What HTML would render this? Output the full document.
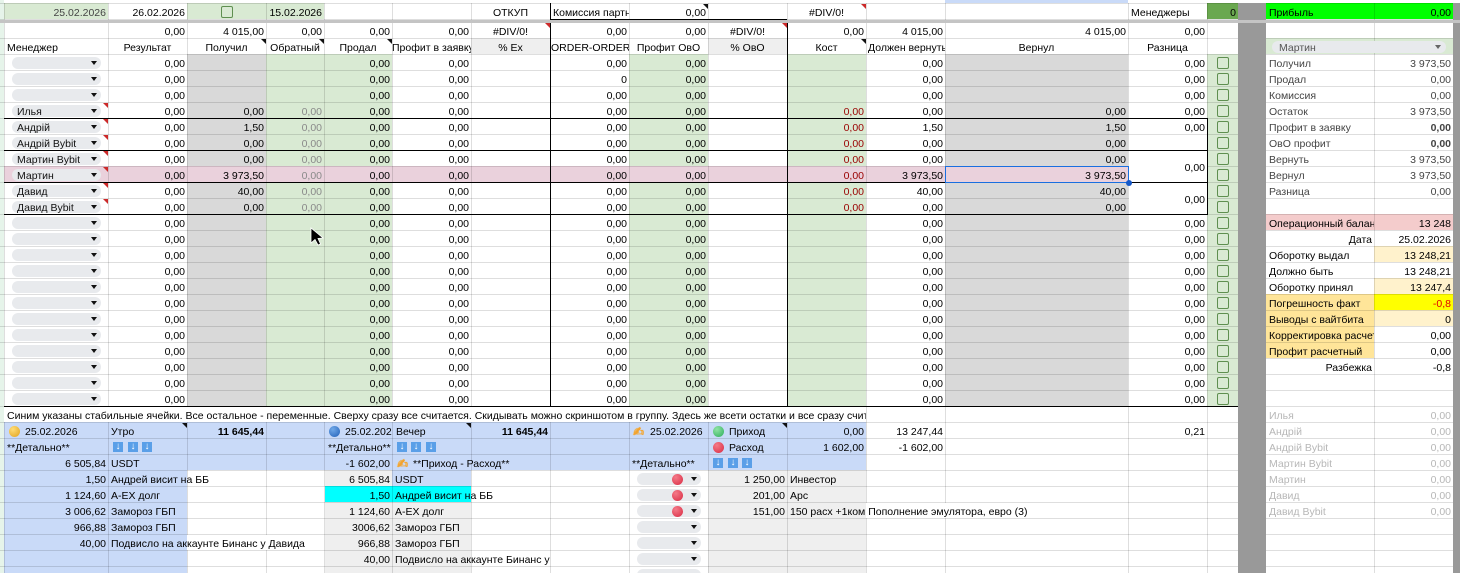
<!DOCTYPE html>
<html lang="ru"><head><meta charset="utf-8"><title>Таблица</title>
<style>
html,body{margin:0;padding:0;background:#fff}
#p{position:relative;width:1460px;height:573px;overflow:hidden;background:#fff;font:10.5px/16px "Liberation Sans","Noto Sans CJK SC",sans-serif;color:#000}
#p div{position:absolute}
.f{position:absolute}
.c{box-sizing:border-box;text-align:right;padding-right:2px;overflow:hidden;white-space:nowrap;margin-top:1px}
.l{text-align:left;padding:0 0 0 3px}
.m{text-align:center;padding:0}
.d{top:55px;height:352px}
.v{width:1px;top:3px;height:570px;background:rgba(0,0,0,.13)}
.h{left:0;width:1460px;height:1px;background:rgba(0,0,0,.13)}
.k{background:#000}
.ch i{display:block;position:relative;height:12px;margin:0 0 4px;background:#e8eaed;border-radius:6px;font-style:normal;line-height:14px;padding-left:5px;box-sizing:border-box;color:#111;white-space:nowrap}
.ch i:after{content:"";position:absolute;right:4px;top:4px;border:3.5px solid transparent;border-top:4px solid #111;border-bottom:0}
.cb b{display:block;box-sizing:border-box;width:12px;height:12px;margin:0 0 4px;border:1.5px solid #5f8f50;border-radius:2px}
.t{width:0;height:0;border-top:5px solid #cc2a2a;border-left:5px solid transparent}
.tk{border-top-color:#111}
.o{border-radius:50%;width:11px;height:11px}
.g{background:radial-gradient(circle at 35% 30%,#ffdd77,#e2a11a)}
.bl{background:radial-gradient(circle at 35% 30%,#6fa8e8,#2361b8)}
.gr{background:radial-gradient(circle at 35% 30%,#8fe3a5,#2fae5c)}
.re{background:radial-gradient(circle at 35% 30%,#f47a88,#d92b43)}
.ar{width:10px;height:10px;background:#5a9fe8;color:#fff;font:bold 10px/10px "Liberation Sans",sans-serif;text-align:center}
.hd{color:#f2a32e;font:13px/14px "DejaVu Sans",sans-serif;text-shadow:.5px .5px 0 #f2a32e,-.5px 0 0 #f7b84a,0 0 1px #f2a32e}
</style></head><body><div id="p">

<!-- fills -->
<div class="f" style="left:0;top:0;width:4px;height:573px;background:#e6f4ea"></div>
<div class="f" style="left:945px;top:0;width:183px;height:3px;background:#c9daf8"></div>
<div class="f" style="left:4px;top:3px;width:104px;height:16px;background:#d9ead3"></div>
<div class="f" style="left:187px;top:3px;width:79px;height:16px;background:#d9ead3"></div>
<div class="f" style="left:266px;top:3px;width:58px;height:16px;background:#d9ead3"></div>
<div class="f" style="left:1207px;top:3px;width:31px;height:16px;background:#6aa84f"></div>
<div class="f" style="left:1266px;top:3px;width:187px;height:16px;background:#00ff00"></div>
<div class="f" style="left:471px;top:38px;width:79px;height:16px;background:#efefef"></div>
<div class="f" style="left:708px;top:38px;width:79px;height:16px;background:#efefef"></div>
<div class="f" style="left:1266px;top:38px;width:187px;height:16px;background:#d9ead3"></div>
<div class="f" style="left:187px;top:54px;width:79px;height:352px;background:#d9d9d9"></div>
<div class="f" style="left:266px;top:54px;width:126px;height:352px;background:#d9ead3"></div>
<div class="f" style="left:629px;top:54px;width:79px;height:352px;background:#d9ead3"></div>
<div class="f" style="left:787px;top:54px;width:79px;height:352px;background:#d9ead3"></div>
<div class="f" style="left:945px;top:54px;width:183px;height:352px;background:#d9d9d9"></div>
<div class="f" style="left:1207px;top:54px;width:31px;height:352px;background:#d9ead3"></div>
<div class="f" style="left:4px;top:166px;width:1124px;height:16px;background:#ead1dc"></div>
<div class="f" style="left:4px;top:422px;width:862px;height:48px;background:#c9daf8"></div>
<div class="f" style="left:4px;top:470px;width:183px;height:103px;background:#c9daf8"></div>
<div class="f" style="left:325px;top:470px;width:146px;height:103px;background:#efefef"></div>
<div class="f" style="left:392px;top:470px;width:79px;height:16px;background:#c9daf8"></div>
<div class="f" style="left:325px;top:486px;width:146px;height:16px;background:#00ffff"></div>
<div class="f" style="left:708px;top:470px;width:158px;height:103px;background:#efefef"></div>
<div class="f" style="left:1266px;top:214px;width:187px;height:16px;background:#f4cccc"></div>
<div class="f" style="left:1374px;top:246px;width:79px;height:16px;background:#fff2cc"></div>
<div class="f" style="left:1374px;top:278px;width:79px;height:16px;background:#fff2cc"></div>
<div class="f" style="left:1266px;top:294px;width:108px;height:16px;background:#ffe599"></div>
<div class="f" style="left:1374px;top:294px;width:79px;height:16px;background:#ffff00"></div>
<div class="f" style="left:1266px;top:310px;width:108px;height:16px;background:#ffe599"></div>
<div class="f" style="left:1374px;top:310px;width:79px;height:16px;background:#fff2cc"></div>
<div class="f" style="left:1266px;top:326px;width:108px;height:32px;background:#ffe599"></div>

<!-- grid -->
<div class="f" style="left:0;top:38px;width:1460px;height:535px;background:repeating-linear-gradient(to bottom,rgba(0,0,0,.13) 0,rgba(0,0,0,.13) 1px,transparent 1px,transparent 16px)"></div>
<div class="h" style="top:3px"></div>
<div class="h" style="top:19px"></div>
<div class="v" style="left:4px"></div><div class="v" style="left:108px"></div><div class="v" style="left:187px"></div><div class="v" style="left:266px"></div><div class="v" style="left:324px"></div><div class="v" style="left:392px"></div><div class="v" style="left:471px"></div><div class="v" style="left:550px"></div><div class="v" style="left:629px"></div><div class="v" style="left:708px"></div><div class="v" style="left:787px"></div><div class="v" style="left:866px"></div><div class="v" style="left:945px"></div><div class="v" style="left:1128px"></div><div class="v" style="left:1207px"></div><div class="v" style="left:1265px"></div><div class="v" style="left:1374px"></div>

<!-- overflow patches -->
<div class="f" style="left:4px;top:407px;width:862px;height:15px;background:#fff"></div>
<div class="f" style="left:188px;top:471px;width:78px;height:15px;background:#fff"></div>
<div class="f" style="left:187px;top:535px;width:121px;height:15px;background:#fff"></div>
<div class="f" style="left:866px;top:503px;width:168px;height:15px;background:#fff"></div>
<div class="f" style="left:1129px;top:151px;width:78px;height:31px;background:#fff"></div>
<div class="f" style="left:1129px;top:183px;width:78px;height:31px;background:#fff"></div>

<!-- gray separators -->
<div class="f" style="left:1238px;top:3px;width:28px;height:570px;background:#999"></div>
<div class="f" style="left:1453px;top:3px;width:7px;height:570px;background:#999"></div>
<div class="f" style="left:0;top:20px;width:1460px;height:3px;background:#c4c4c4"></div>

<!-- black rules -->
<div class="f k" style="left:550px;top:3px;width:1px;height:17px"></div>
<div class="f k" style="left:550px;top:19px;width:237px;height:1px"></div>
<div class="f k" style="left:550px;top:23px;width:1px;height:383px"></div>
<div class="f k" style="left:787px;top:23px;width:1px;height:383px"></div>
<div class="f k" style="left:4px;top:118px;width:1203px;height:1px"></div>
<div class="f k" style="left:4px;top:150px;width:1203px;height:1px"></div>
<div class="f k" style="left:4px;top:182px;width:1203px;height:1px"></div>
<div class="f k" style="left:4px;top:214px;width:1203px;height:1px"></div>
<div class="f k" style="left:4px;top:406px;width:1234px;height:1px"></div>
<div class="f k" style="left:1207px;top:118px;width:1px;height:97px"></div>

<!-- selection -->
<div class="f" style="left:945px;top:166px;width:184px;height:17px;box-sizing:border-box;border:1px solid #1a6fe0"></div>
<div class="f" style="left:1126px;top:180px;width:6px;height:6px;border-radius:50%;background:#1558c8"></div>

<!-- top row -->
<div class="c" style="left:4px;top:4px;width:104px;color:#444">25.02.2026</div>
<div class="c" style="left:108px;top:4px;width:79px">26.02.2026</div>
<div class="cb" style="left:221px;top:6px"><b></b></div>
<div class="c" style="left:266px;top:4px;width:58px">15.02.2026</div>
<div class="c m" style="left:471px;top:4px;width:79px">ОТКУП</div>
<div class="c l" style="left:550px;top:4px;width:79px">Комиссия партн</div>
<div class="c" style="left:629px;top:4px;width:79px">0,00</div>
<div class="c m" style="left:787px;top:4px;width:79px">#DIV/0!</div>
<div class="c l" style="left:1128px;top:4px;width:79px">Менеджеры</div>
<div class="c" style="left:1207px;top:4px;width:31px">0</div>
<div class="c l" style="left:1266px;top:4px;width:108px">Прибыль</div>
<div class="c" style="left:1374px;top:4px;width:79px">0,00</div>

<!-- totals -->
<div class="c" style="left:108px;top:23px;width:79px">0,00</div>
<div class="c" style="left:187px;top:23px;width:79px">4 015,00</div>
<div class="c" style="left:266px;top:23px;width:58px">0,00</div>
<div class="c" style="left:324px;top:23px;width:68px">0,00</div>
<div class="c" style="left:392px;top:23px;width:79px">0,00</div>
<div class="c m" style="left:471px;top:23px;width:79px">#DIV/0!</div>
<div class="c" style="left:550px;top:23px;width:79px">0,00</div>
<div class="c" style="left:629px;top:23px;width:79px">0,00</div>
<div class="c m" style="left:708px;top:23px;width:79px">#DIV/0!</div>
<div class="c" style="left:787px;top:23px;width:79px">0,00</div>
<div class="c" style="left:866px;top:23px;width:79px">4 015,00</div>
<div class="c" style="left:945px;top:23px;width:183px">4 015,00</div>
<div class="c" style="left:1128px;top:23px;width:79px">0,00</div>

<!-- headers -->
<div class="c l" style="left:4px;top:39px;width:104px">Менеджер</div>
<div class="c m" style="left:108px;top:39px;width:79px">Результат</div>
<div class="c m" style="left:187px;top:39px;width:79px">Получил</div>
<div class="c m" style="left:266px;top:39px;width:58px">Обратный</div>
<div class="c m" style="left:324px;top:39px;width:68px">Продал</div>
<div class="c l" style="left:392px;top:39px;width:79px;padding-left:0">Профит в заявку</div>
<div class="c m" style="left:471px;top:39px;width:79px">% Ex</div>
<div class="c m" style="left:551px;top:39px;width:78px">ORDER-ORDER</div>
<div class="c m" style="left:629px;top:39px;width:79px">Профит ОвО</div>
<div class="c m" style="left:708px;top:39px;width:79px">% ОвО</div>
<div class="c m" style="left:787px;top:39px;width:79px">Кост</div>
<div class="c l" style="left:866px;top:39px;width:79px;padding-left:2px">Должен вернуть</div>
<div class="c m" style="left:945px;top:39px;width:183px">Вернул</div>
<div class="c m" style="left:1128px;top:39px;width:79px">Разница</div>

<!-- manager chips -->
<div class="ch" style="left:12px;top:57px;width:89px">
<i></i><i></i><i></i><i>Илья</i><i>Андрій</i><i>Андрій Bybit</i><i>Мартин Bybit</i><i>Мартин</i><i>Давид</i><i>Давид Bybit</i><i></i><i></i><i></i><i></i><i></i><i></i><i></i><i></i><i></i><i></i><i></i><i></i>
</div>

<!-- data columns -->
<div class="c d" style="left:108px;width:79px">0,00<br>0,00<br>0,00<br>0,00<br>0,00<br>0,00<br>0,00<br>0,00<br>0,00<br>0,00<br>0,00<br>0,00<br>0,00<br>0,00<br>0,00<br>0,00<br>0,00<br>0,00<br>0,00<br>0,00<br>0,00<br>0,00</div>
<div class="c d" style="left:187px;width:79px"><br><br><br>0,00<br>1,50<br>0,00<br>0,00<br>3 973,50<br>40,00<br>0,00</div>
<div class="c d" style="left:266px;width:58px;color:#8a8a8a"><br><br><br>0,00<br>0,00<br>0,00<br>0,00<br>0,00<br>0,00<br>0,00</div>
<div class="c d" style="left:324px;width:68px">0,00<br>0,00<br>0,00<br>0,00<br>0,00<br>0,00<br>0,00<br>0,00<br>0,00<br>0,00<br>0,00<br>0,00<br>0,00<br>0,00<br>0,00<br>0,00<br>0,00<br>0,00<br>0,00<br>0,00<br>0,00<br>0,00</div>
<div class="c d" style="left:392px;width:79px">0,00<br>0,00<br>0,00<br>0,00<br>0,00<br>0,00<br>0,00<br>0,00<br>0,00<br>0,00<br>0,00<br>0,00<br>0,00<br>0,00<br>0,00<br>0,00<br>0,00<br>0,00<br>0,00<br>0,00<br>0,00<br>0,00</div>
<div class="c d" style="left:550px;width:79px">0,00<br>0<br>0,00<br>0,00<br>0,00<br>0,00<br>0,00<br>0,00<br>0,00<br>0,00<br>0,00<br>0,00<br>0,00<br>0,00<br>0,00<br>0,00<br>0,00<br>0,00<br>0,00<br>0,00<br>0,00<br>0,00</div>
<div class="c d" style="left:629px;width:79px">0,00<br>0,00<br>0,00<br>0,00<br>0,00<br>0,00<br>0,00<br>0,00<br>0,00<br>0,00<br>0,00<br>0,00<br>0,00<br>0,00<br>0,00<br>0,00<br>0,00<br>0,00<br>0,00<br>0,00<br>0,00<br>0,00</div>
<div class="c d" style="left:787px;width:79px;color:#990000"><br><br><br>0,00<br>0,00<br>0,00<br>0,00<br>0,00<br>0,00<br>0,00</div>
<div class="c d" style="left:866px;width:79px">0,00<br>0,00<br>0,00<br>0,00<br>1,50<br>0,00<br>0,00<br>3 973,50<br>40,00<br>0,00<br>0,00<br>0,00<br>0,00<br>0,00<br>0,00<br>0,00<br>0,00<br>0,00<br>0,00<br>0,00<br>0,00<br>0,00</div>
<div class="c d" style="left:945px;width:183px"><br><br><br>0,00<br>1,50<br>0,00<br>0,00<br>3 973,50<br>40,00<br>0,00</div>
<div class="c d" style="left:1128px;width:79px">0,00<br>0,00<br>0,00<br>0,00<br>0,00</div>
<div class="c" style="left:1128px;top:159px;width:79px">0,00</div>
<div class="c" style="left:1128px;top:191px;width:79px">0,00</div>
<div class="c" style="left:1128px;top:215px;width:79px">0,00<br>0,00<br>0,00<br>0,00<br>0,00<br>0,00<br>0,00<br>0,00<br>0,00<br>0,00<br>0,00<br>0,00</div>

<!-- checkboxes -->
<div class="cb" style="left:1217px;top:57px">
<b></b><b></b><b></b><b></b><b></b><b></b><b></b><b></b><b></b><b></b><b></b><b></b><b></b><b></b><b></b><b></b><b></b><b></b><b></b><b></b><b></b><b></b>
</div>

<!-- corner triangles -->
<div class="t" style="left:103px;top:103px"></div><div class="t" style="left:103px;top:119px"></div><div class="t" style="left:103px;top:135px"></div><div class="t" style="left:103px;top:151px"></div><div class="t" style="left:103px;top:167px"></div><div class="t" style="left:103px;top:183px"></div><div class="t" style="left:103px;top:199px"></div>
<div class="t tk" style="left:261px;top:39px"></div><div class="t tk" style="left:319px;top:39px"></div><div class="t tk" style="left:387px;top:39px"></div>
<div class="t tk" style="left:703px;top:4px"></div><div class="t" style="left:861px;top:4px"></div>
<div class="t" style="left:545px;top:23px"></div><div class="t" style="left:782px;top:23px"></div><div class="t tk" style="left:861px;top:39px"></div>
<div class="t tk" style="left:182px;top:423px"></div><div class="t tk" style="left:466px;top:423px"></div><div class="t tk" style="left:782px;top:423px"></div>

<!-- right panel -->
<div class="f" style="left:1272px;top:41px;width:174px;height:12px;background:#e8eaed;border-radius:6px;line-height:14px;color:#555;padding-left:7px;box-sizing:border-box">Мартин</div>
<div class="f" style="left:1435px;top:45px;width:0;height:0;border:3.5px solid transparent;border-top:4px solid #666;border-bottom:0"></div>
<div class="c l" style="left:1266px;top:55px;width:108px;color:#444">Получил<br>Продал<br>Комиссия<br>Остаток<br>Профит в заявку<br>ОвО профит<br>Вернуть<br>Вернул<br>Разница</div>
<div class="c" style="left:1374px;top:55px;width:79px;color:#444">3 973,50<br>0,00<br>0,00<br>3 973,50<br><b>0,00</b><br><b>0,00</b><br>3 973,50<br>3 973,50<br>0,00</div>
<div class="c l" style="left:1266px;top:215px;width:108px">Операционный балан</div>
<div class="c" style="left:1266px;top:231px;width:108px">Дата</div>
<div class="c l" style="left:1266px;top:247px;width:108px">Оборотку выдал<br>Должно быть<br>Оборотку принял<br>Погрешность факт<br>Выводы с вайтбита<br>Корректировка расчет<br>Профит расчетный</div>
<div class="c" style="left:1266px;top:359px;width:108px">Разбежка</div>
<div class="c" style="left:1374px;top:215px;width:79px">13 248<br>25.02.2026<br>13 248,21<br>13 248,21<br>13 247,4<br><span style="color:#e00000">-0,8</span><br>0<br>0,00<br>0,00<br>-0,8</div>
<div class="c l" style="left:1266px;top:407px;width:108px;color:#b7b7b7">Илья<br>Андрій<br>Андрій Bybit<br>Мартин Bybit<br>Мартин<br>Давид<br>Давид Bybit</div>
<div class="c" style="left:1374px;top:407px;width:79px;color:#b7b7b7">0,00<br>0,00<br>0,00<br>0,00<br>0,00<br>0,00<br>0,00</div>

<!-- note -->
<div class="c l" style="left:4px;top:407px;width:862px">Синим указаны стабильные ячейки. Все остальное - переменные. Сверху сразу все считается. Скидывать можно скриншотом в группу. Здесь же всети остатки и все сразу счит</div>

<!-- bottom header -->
<div class="o g" style="left:9px;top:426px"></div>
<div class="c l" style="left:22px;top:423px;width:86px">25.02.2026</div>
<div class="c l" style="left:108px;top:423px;width:79px">Утро</div>
<div class="c" style="left:187px;top:423px;width:79px"><b>11 645,44</b></div>
<div class="o bl" style="left:329px;top:426px"></div>
<div class="c l" style="left:342px;top:423px;width:50px">25.02.2026</div>
<div class="c l" style="left:393px;top:423px;width:78px">Вечер</div>
<div class="c" style="left:471px;top:423px;width:79px"><b>11 645,44</b></div>
<div class="hd" style="left:633px;top:426px">✍</div>
<div class="c l" style="left:647px;top:423px;width:61px">25.02.2026</div>
<div class="o gr" style="left:713px;top:426px"></div>
<div class="c l" style="left:726px;top:423px;width:61px">Приход</div>
<div class="c" style="left:787px;top:423px;width:79px">0,00</div>
<div class="c" style="left:866px;top:423px;width:79px">13 247,44</div>
<div class="c" style="left:1128px;top:423px;width:79px">0,21</div>

<div class="c l" style="left:4px;top:439px;width:104px">**Детально**</div>
<div class="ar" style="left:113px;top:442px">↓</div><div class="ar" style="left:128px;top:442px">↓</div><div class="ar" style="left:142px;top:442px">↓</div>
<div class="c l" style="left:325px;top:439px;width:67px">**Детально**</div>
<div class="ar" style="left:397px;top:442px">↓</div><div class="ar" style="left:411px;top:442px">↓</div><div class="ar" style="left:426px;top:442px">↓</div>
<div class="o re" style="left:713px;top:442px"></div>
<div class="c l" style="left:726px;top:439px;width:61px">Расход</div>
<div class="c" style="left:787px;top:439px;width:79px">1 602,00</div>
<div class="c" style="left:866px;top:439px;width:79px">-1 602,00</div>

<div class="c" style="left:4px;top:455px;width:104px">6 505,84</div>
<div class="c l" style="left:108px;top:455px;width:79px">USDT</div>
<div class="c" style="left:324px;top:455px;width:68px">-1 602,00</div>
<div class="hd" style="left:397px;top:458px">✍</div>
<div class="c l" style="left:410px;top:455px;width:140px">**Приход - Расход**</div>
<div class="c l" style="left:629px;top:455px;width:79px">**Детально**</div>
<div class="ar" style="left:713px;top:458px">↓</div><div class="ar" style="left:728px;top:458px">↓</div><div class="ar" style="left:742px;top:458px">↓</div>

<!-- bottom data -->
<div class="c" style="left:4px;top:471px;width:104px">1,50<br>1 124,60<br>3 006,62<br>966,88<br>40,00</div>
<div class="c l" style="left:108px;top:471px;width:210px">Андрей висит на ББ<br>А-ЕХ долг<br>Замороз ГБП<br>Замороз ГБП<br>Подвисло на аккаунте Бинанс у Давида</div>
<div class="c" style="left:324px;top:471px;width:68px">6 505,84<br>1,50<br>1 124,60<br>3006,62<br>966,88<br>40,00</div>
<div class="c l" style="left:392px;top:471px;width:158px">USDT<br>Андрей висит на ББ<br>А-ЕХ долг<br>Замороз ГБП<br>Замороз ГБП<br>Подвисло на аккаунте Бинанс у</div>
<div class="ch" style="left:637px;top:473px;width:64px">
<i></i><i></i><i></i><i></i><i></i><i></i><i></i>
</div>
<div class="o re" style="left:672px;top:474px"></div><div class="o re" style="left:672px;top:490px"></div><div class="o re" style="left:672px;top:506px"></div>
<div class="c" style="left:708px;top:471px;width:79px">1 250,00<br>201,00<br>151,00</div>
<div class="c l" style="left:787px;top:471px;width:300px">Инвестор<br>Арс<br>150 расх +1ком Пополнение эмулятора, евро (3)</div>

<!-- cursor -->
<svg class="f" style="position:absolute;left:308px;top:226px" width="18" height="22" viewBox="0 0 18 22"><path d="M3 2 L3 17 L7 13.5 L10 19 L12.5 18 L10 12.5 L15 12 Z" fill="#000" stroke="#fff" stroke-width=".8"/></svg>
</div></body></html>
